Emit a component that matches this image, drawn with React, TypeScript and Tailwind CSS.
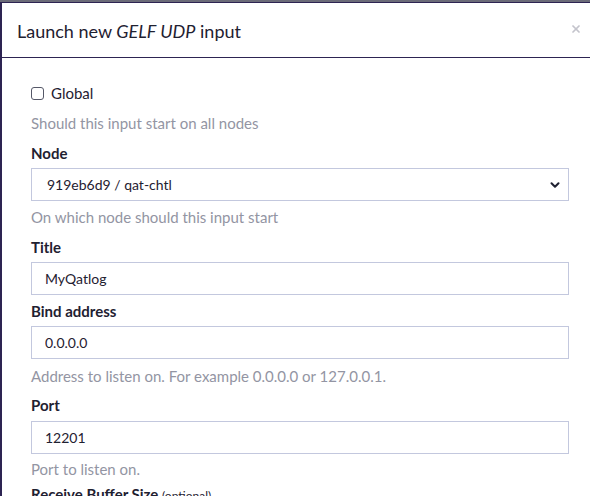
import { ChevronDown, X } from "lucide-react";

const font = { fontFamily: "Lato, 'Open Sans', sans-serif" };

const Label = ({ children }: { children: React.ReactNode }) => (
  <label className="block text-[15px] font-bold leading-[20px] text-[#1f2131]">{children}</label>
);

const Help = ({ children, className = "" }: { children: React.ReactNode; className?: string }) => (
  <p className={`text-[15px] leading-[20px] text-[#9395a3] ${className}`}>{children}</p>
);

const Field = ({ value }: { value: string }) => (
  <input
    readOnly
    value={value}
    className="block h-[33px] w-full border border-[#c3c8de] bg-white px-[13px] text-[14px] text-[#1f2131] outline-none"
  />
);

export default function App() {
  return (
    <div style={font} className="h-[496px] w-[590px] overflow-hidden bg-[#6b6b78] pt-[2px]">
      <div className="h-full w-[600px] border-l-2 border-t border-[#2d2452] bg-white">
        <div className="flex h-[55px] items-center justify-between border-b border-[#2d2452] pl-[15px] pr-[18px]">
          <h4 className="mt-[2px] text-[18px] text-[#1f2131]">
            Launch new <em>GELF UDP</em> input
          </h4>
          <X size={12} strokeWidth={3.5} className="mb-[2px] text-[#c4c4cc]" />
        </div>

        <div className="w-[567px] pl-[29px] pt-[25px]">
          <div className="flex h-[20px] items-center gap-[7px]">
            <span className="h-[13px] w-[13px] rounded-[3px] border border-[#555868] bg-white" />
            <span className="text-[15px] text-[#1f2131]">Global</span>
          </div>
          <Help className="mt-[10px]">Should this input start on all nodes</Help>

          <div className="mt-[10px]">
            <Label>Node</Label>
            <div className="mt-[5px] flex h-[33px] items-center justify-between border border-[#c3c8de] bg-white pl-[15px] pr-[6px] text-[14px] text-[#1f2131]">
              <span>919eb6d9 / qat-chtl</span>
              <ChevronDown size={14} strokeWidth={3.5} className="text-[#1f2131]" />
            </div>
            <Help className="mt-[6px]">On which node should this input start</Help>
          </div>

          <div className="mt-[10px]">
            <Label>Title</Label>
            <div className="mt-[5px]">
              <Field value="MyQatlog" />
            </div>
          </div>

          <div className="mt-[6px]">
            <Label>Bind address</Label>
            <div className="mt-[5px]">
              <Field value="0.0.0.0" />
            </div>
            <Help className="mt-[7px]">Address to listen on. For example 0.0.0.0 or 127.0.0.1.</Help>
          </div>

          <div className="mt-[9px]">
            <Label>Port</Label>
            <div className="mt-[6px]">
              <Field value="12201" />
            </div>
            <Help className="mt-[5px]">Port to listen on.</Help>
          </div>

          <div className="mt-[5px]">
            <Label>
              Receive Buffer Size <span className="text-[12px] font-normal">(optional)</span>
            </Label>
          </div>
        </div>
      </div>
    </div>
  );
}
